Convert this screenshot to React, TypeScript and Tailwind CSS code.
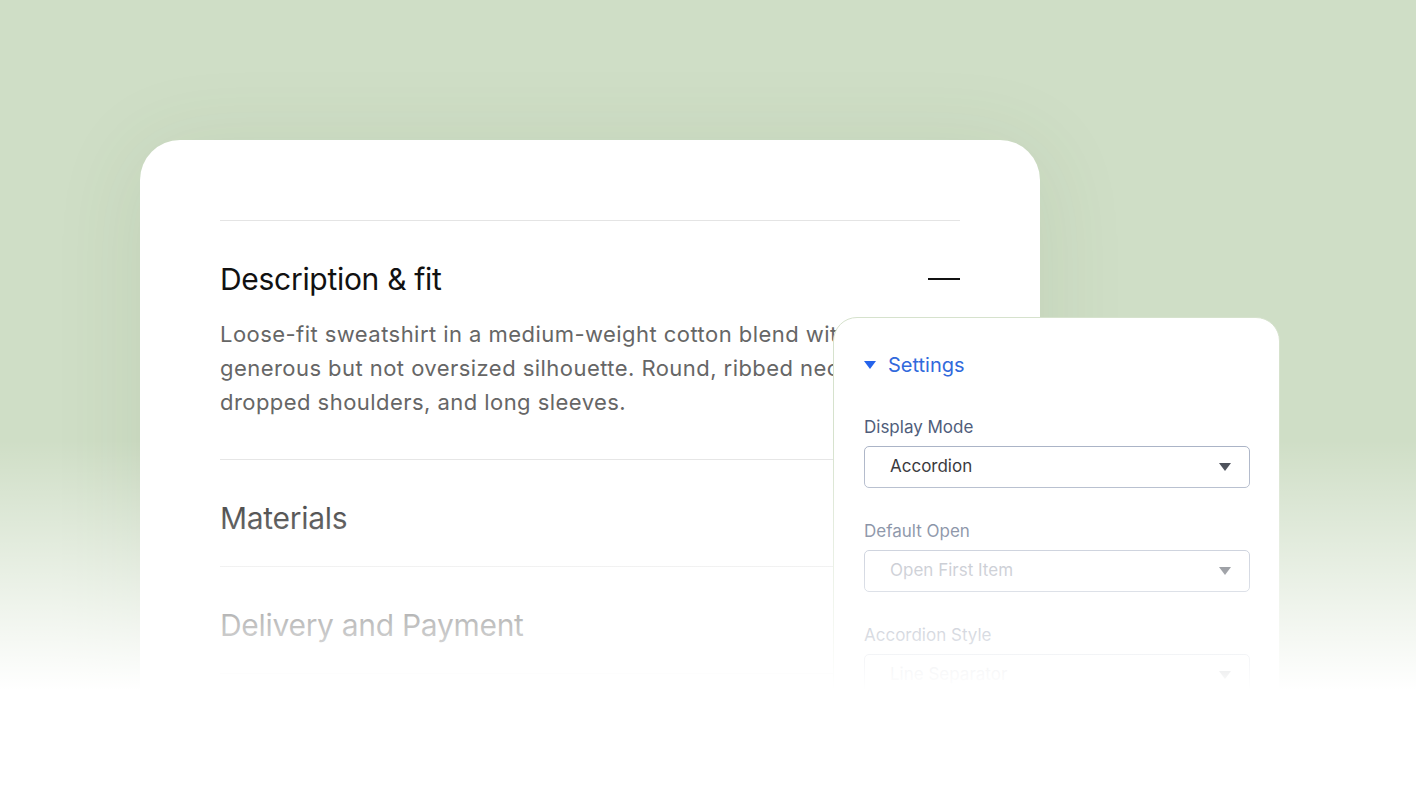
const sans = "font-['Inter','Noto_Sans',sans-serif]";

function Caret({ className }: { className: string }) {
  return (
    <svg viewBox="0 0 12 8" className={className} fill="currentColor">
      <path d="M0 0h12L6 8z" />
    </svg>
  );
}

function Field({ label, value, valueClass }: { label: string; value: string; valueClass: string }) {
  return (
    <div className="flex flex-col gap-[7px]">
      <span className="text-[17px] leading-[24px] text-[#4f5d7b]">{label}</span>
      <div className="h-[42px] w-[386px] rounded-[5px] border border-[#a9b2c5] bg-white pl-[25px] pr-[18px] flex items-center justify-between">
        <span className={`text-[17px] ${valueClass}`}>{value}</span>
        <Caret className="w-[12px] h-[8px] text-[#3a3f4a]" />
      </div>
    </div>
  );
}

export default function App() {
  return (
    <div className={`relative h-[796px] w-full overflow-hidden bg-[#cfdec6] ${sans}`}>
      {/* product card */}
      <div className="ml-[140px] mt-[140px] w-[900px] h-[700px] rounded-[40px] bg-white px-[80px] pt-[80px] shadow-[0_10px_90px_rgba(70,95,50,0.10)]">
        <div className="border-t border-[#e4e4e4]">
          <div className="flex items-center justify-between pt-[40px] pb-[20px]">
            <h2 className="text-[30px] leading-[36px] text-[#111] tracking-[-0.3px]">Description &amp; fit</h2>
            <div className="w-[32px] h-[2px] bg-[#111]" />
          </div>
          <p className="text-[22px] leading-[34px] text-[#666] tracking-[0.45px] whitespace-nowrap pb-[40px]">
            Loose-fit sweatshirt in a medium-weight cotton blend with a<br />
            generous but not oversized silhouette. Round, ribbed neckline,<br />
            dropped shoulders, and long sleeves.
          </p>
        </div>
        <div className="border-t border-[#e4e4e4] pt-[41px] pb-[31px]">
          <h2 className="text-[30px] leading-[34px] text-[#111] tracking-[-0.3px]">Materials</h2>
        </div>
        <div className="border-t border-[#e4e4e4] pt-[41px] pb-[31px]">
          <h2 className="text-[30px] leading-[34px] text-[#111] tracking-[-0.3px]">Delivery and Payment</h2>
        </div>
        <div className="border-t border-[#e4e4e4]" />
      </div>

      {/* settings panel */}
      <div className="absolute left-[833px] top-[317px] w-[447px] h-[500px] rounded-[24px] border border-[#d6e2cd] bg-white pl-[30px] pt-[35px]">
        <div className="flex items-center gap-[12px]">
          <Caret className="w-[12px] h-[8px] text-[#2563eb]" />
          <span className="text-[20px] leading-[24px] text-[#3169dc]">Settings</span>
        </div>
        <div className="mt-[38px] flex flex-col gap-[31px]">
          <Field label="Display Mode" value="Accordion" valueClass="text-[#1f2328]" />
          <Field label="Default Open" value="Open First Item" valueClass="text-[#9aa0ad]" />
          <Field label="Accordion Style" value="Line Separator" valueClass="text-[#9aa0ad]" />
        </div>
      </div>

      {/* bottom fade */}
      <div className="pointer-events-none absolute left-0 right-0 top-[440px] h-[250px] bg-gradient-to-b from-white/0 to-white" />
      <div className="pointer-events-none absolute left-0 right-0 top-[689px] bottom-0 bg-white" />
    </div>
  );
}
